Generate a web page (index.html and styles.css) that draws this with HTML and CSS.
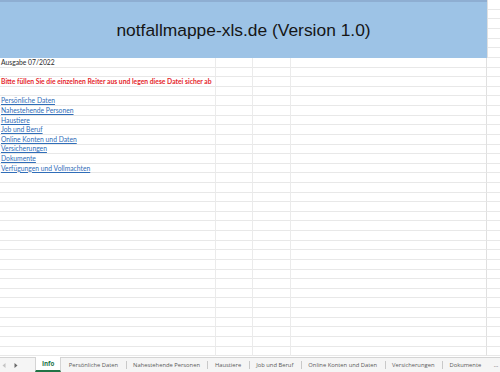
FILE: index.html
```html
<!DOCTYPE html>
<html lang="de">
<head>
<meta charset="utf-8">
<title>notfallmappe-xls.de</title>
<link rel="stylesheet" href="styles.css">
</head>
<body>
<div class="app">
  <div class="sheet">
    <div class="top">
      <div class="title">notfallmappe-xls.de (Version 1.0)</div>
      <div class="edge">
        <div class="ecell"></div><div class="ecell"></div><div class="ecell"></div>
        <div class="ecell"></div><div class="ecell"></div><div class="ecell"></div>
      </div>
    </div>
    <div class="rows">
      <div class="row"><div class="c a"><span class="txt">Ausgabe 07/2022</span></div><div class="c b"></div><div class="c cc"></div><div class="c d"></div><div class="c e"></div></div>
      <div class="row"><div class="c a"></div><div class="c b"></div><div class="c cc"></div><div class="c d"></div><div class="c e"></div></div>
      <div class="row"><div class="c a"><span class="warn">Bitte füllen Sie die einzelnen Reiter aus und legen diese Datei sicher ab</span></div><div class="c b"></div><div class="c cc"></div><div class="c d"></div><div class="c e"></div></div>
      <div class="row"><div class="c a"></div><div class="c b"></div><div class="c cc"></div><div class="c d"></div><div class="c e"></div></div>
      <div class="row"><div class="c a"><a class="link" href="#">Persönliche Daten</a></div><div class="c b"></div><div class="c cc"></div><div class="c d"></div><div class="c e"></div></div>
      <div class="row"><div class="c a"><a class="link" href="#">Nahestehende Personen</a></div><div class="c b"></div><div class="c cc"></div><div class="c d"></div><div class="c e"></div></div>
      <div class="row"><div class="c a"><a class="link" href="#">Haustiere</a></div><div class="c b"></div><div class="c cc"></div><div class="c d"></div><div class="c e"></div></div>
      <div class="row"><div class="c a"><a class="link" href="#">Job und Beruf</a></div><div class="c b"></div><div class="c cc"></div><div class="c d"></div><div class="c e"></div></div>
      <div class="row"><div class="c a"><a class="link" href="#">Online Konten und Daten</a></div><div class="c b"></div><div class="c cc"></div><div class="c d"></div><div class="c e"></div></div>
      <div class="row"><div class="c a"><a class="link" href="#">Versicherungen</a></div><div class="c b"></div><div class="c cc"></div><div class="c d"></div><div class="c e"></div></div>
      <div class="row"><div class="c a"><a class="link" href="#">Dokumente</a></div><div class="c b"></div><div class="c cc"></div><div class="c d"></div><div class="c e"></div></div>
      <div class="row"><div class="c a"><a class="link" href="#">Verfügungen und Vollmachten</a></div><div class="c b"></div><div class="c cc"></div><div class="c d"></div><div class="c e"></div></div>
      <div class="row"><div class="c a"></div><div class="c b"></div><div class="c cc"></div><div class="c d"></div><div class="c e"></div></div>
      <div class="row"><div class="c a"></div><div class="c b"></div><div class="c cc"></div><div class="c d"></div><div class="c e"></div></div>
      <div class="row"><div class="c a"></div><div class="c b"></div><div class="c cc"></div><div class="c d"></div><div class="c e"></div></div>
      <div class="row"><div class="c a"></div><div class="c b"></div><div class="c cc"></div><div class="c d"></div><div class="c e"></div></div>
      <div class="row"><div class="c a"></div><div class="c b"></div><div class="c cc"></div><div class="c d"></div><div class="c e"></div></div>
      <div class="row"><div class="c a"></div><div class="c b"></div><div class="c cc"></div><div class="c d"></div><div class="c e"></div></div>
      <div class="row"><div class="c a"></div><div class="c b"></div><div class="c cc"></div><div class="c d"></div><div class="c e"></div></div>
      <div class="row"><div class="c a"></div><div class="c b"></div><div class="c cc"></div><div class="c d"></div><div class="c e"></div></div>
      <div class="row"><div class="c a"></div><div class="c b"></div><div class="c cc"></div><div class="c d"></div><div class="c e"></div></div>
      <div class="row"><div class="c a"></div><div class="c b"></div><div class="c cc"></div><div class="c d"></div><div class="c e"></div></div>
      <div class="row"><div class="c a"></div><div class="c b"></div><div class="c cc"></div><div class="c d"></div><div class="c e"></div></div>
      <div class="row"><div class="c a"></div><div class="c b"></div><div class="c cc"></div><div class="c d"></div><div class="c e"></div></div>
      <div class="row"><div class="c a"></div><div class="c b"></div><div class="c cc"></div><div class="c d"></div><div class="c e"></div></div>
      <div class="row"><div class="c a"></div><div class="c b"></div><div class="c cc"></div><div class="c d"></div><div class="c e"></div></div>
      <div class="row"><div class="c a"></div><div class="c b"></div><div class="c cc"></div><div class="c d"></div><div class="c e"></div></div>
      <div class="row"><div class="c a"></div><div class="c b"></div><div class="c cc"></div><div class="c d"></div><div class="c e"></div></div>
      <div class="row"><div class="c a"></div><div class="c b"></div><div class="c cc"></div><div class="c d"></div><div class="c e"></div></div>
      <div class="row"><div class="c a"></div><div class="c b"></div><div class="c cc"></div><div class="c d"></div><div class="c e"></div></div>
      <div class="row"><div class="c a"></div><div class="c b"></div><div class="c cc"></div><div class="c d"></div><div class="c e"></div></div>
    </div>
  </div>
  <div class="tabbar">
    <div class="nav">
      <svg class="arrow" width="4" height="5" viewBox="0 0 4 5"><path d="M3.5 0 L0.5 2.5 L3.5 5 Z" fill="#c4c4c4"/></svg>
      <svg class="arrow" width="4" height="5" viewBox="0 0 4 5"><path d="M0.5 0 L3.5 2.5 L0.5 5 Z" fill="#6a6a6a"/></svg>
    </div>
    <div class="tab active">Info</div>
    <div class="tab">Persönliche Daten</div>
    <div class="tab">Nahestehende Personen</div>
    <div class="tab">Haustiere</div>
    <div class="tab">Job und Beruf</div>
    <div class="tab">Online Konten und Daten</div>
    <div class="tab">Versicherungen</div>
    <div class="tab">Dokumente</div>
    <div class="more">…</div>
  </div>
</div>
</body>
</html>
```
FILE: styles.css
```css
* { box-sizing: border-box; }
html, body { margin: 0; padding: 0; background: #fff; }
.app { width: 500px; height: 372px; overflow: hidden; display: flex; flex-direction: column; }
.sheet { height: 357px; flex: none; overflow: hidden; display: flex; flex-direction: column; }
.top { display: flex; height: 57.8px; flex: none; }
.title {
  width: 487px; height: 100%;
  background: #9dc3e6;
  border-top: 2px solid #8eaed2;
  display: flex; align-items: center; justify-content: center;
  font-family: "Liberation Sans", Arial, sans-serif;
  font-size: 17.4px; color: #161616;
  padding-top: 1px;
}
.edge { flex: 1; display: flex; flex-direction: column; border-left: 1px solid #e0e0e0; }
.ecell { height: 9.63px; flex: none; border-bottom: 1px solid #e8e8e8; }
.rows { display: flex; flex-direction: column; }
.row { display: grid; grid-template-columns: 216px 37px 38px 196px 1fr; height: 9.63px; flex: none; }
.c { border-bottom: 1px solid #e8e8e8; border-right: 1px solid #ebebeb; overflow: visible; white-space: nowrap; display: flex; align-items: flex-end; }
.c.e { border-right: none; }
.c.d { border-right: 1px solid #e0e0e0; }
.a { padding-left: 1px; }
.txt, .warn, .link {
  font-family: Lato, "Open Sans", sans-serif;
  font-size: 6.75px; line-height: 8.8px;
}
.txt { color: #2b2b2b; }
.warn { color: #e5262b; font-weight: bold; }
.link { color: #2f6db8; text-decoration: underline; }
.tabbar {
  height: 15px; flex: none; display: flex; align-items: stretch;
  border-top: 1px solid #d4d4d4; background: #f5f5f5;
  font-family: "Open Sans", "Noto Sans", sans-serif; font-size: 5.8px; color: #5a5a5a;
  white-space: nowrap;
}
.nav { width: 35px; flex: none; display: flex; align-items: center; gap: 8px; padding-left: 2px; }
.arrow { display: block; }
.tab { flex: none; display: flex; align-items: center; padding: 0 7.5px; position: relative; }
.tab + .tab::before { content: ""; position: absolute; left: 0; top: 3px; bottom: 3px; border-left: 1px solid #c9c9c9; }
.tab.active + .tab::before { display: none; }
.tab.active {
  background: #fff; color: #217346; font-weight: bold;
  padding: 0 6px; margin-top: -1px; font-size: 6.2px;
  border-left: 1px solid #d4d4d4; border-right: 1px solid #d4d4d4;
  border-bottom: 2px solid #217346;
}
.more { flex: none; display: flex; align-items: center; padding-left: 5px; color: #505050; }
```
